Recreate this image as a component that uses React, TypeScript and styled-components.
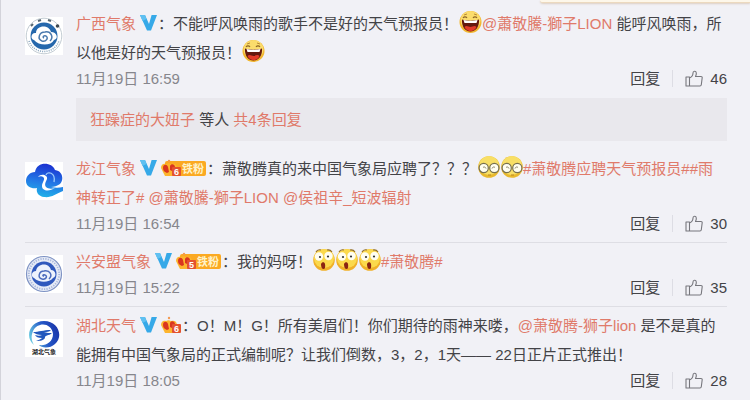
import React from "react";
import styled, { createGlobalStyle } from "styled-components";

const GlobalStyle = createGlobalStyle`
  * { box-sizing: border-box; }
  body {
    margin: 0;
    background: #f1f1f6;
    color: #434347;
    font-family: "Liberation Sans", "Noto Sans CJK SC", sans-serif;
    font-size: 15px;
  }
`;

const Page = styled.main`
  position: relative;
  min-height: 100vh;
  overflow: hidden;
  border-left: 1px solid #d3d3da;
`;

const Notice = styled.div`
  position: absolute;
  top: 0;
  right: 0;
  width: 28%;
  height: 3px;
  background: #fdf7ea;
  border-bottom: 1px solid #ecd9bf;
  border-bottom-left-radius: 3px;
  box-shadow: 0 1px 2px #dccfc4;
`;

const List = styled.ul`
  margin: 0;
  padding: 4px 23px 0 24px;
  list-style: none;
`;

const Item = styled.li<{ $line?: boolean }>`
  display: flex;
  gap: 13px;
  padding: 4px 0 8px;
  border-top: 1px solid ${(p) => (p.$line ? "#dedee4" : "transparent")};
`;

const Avatar = styled.a`
  flex: none;
  width: 38px;
  height: 38px;
  margin-top: 8px;
  background: #fff;
  svg { display: block; }
`;

const Body = styled.div`
  flex: 1;
  min-width: 0;
`;

const Text = styled.p`
  margin: 0;
  line-height: 29px;
  white-space: nowrap;
`;

const Link = styled.a`
  color: #e07a6a;
  text-decoration: none;
`;

const Glyph = styled.svg<{ $gap?: number }>`
  display: inline-block;
  vertical-align: middle;
  margin: -4px 0 0 ${(p) => p.$gap ?? 0}px;
`;

const Face = styled(Glyph)`
  margin: -6px 0 0 1px;
`;

const Meta = styled.div`
  display: flex;
  align-items: center;
  height: 21px;
  margin-top: 1px;
  line-height: 16px;
`;

const Time = styled.time`
  flex: 1;
  color: #86868c;
`;

const Action = styled.button`
  display: flex;
  align-items: center;
  padding: 0;
  border: 0;
  background: none;
  color: inherit;
  font: inherit;
`;

const Like = styled(Action)`
  gap: 7px;
  margin-left: 12px;
  padding-left: 12px;
  border-left: 1px solid #dddde4;
`;

const Replies = styled.div`
  margin-top: 9px;
  padding: 7px 14px;
  line-height: 29px;
  background: #e9e8ed;
`;

const Verified = () => (
  <Glyph $gap={3} width="19" height="18" viewBox="0 0 19 18" role="img" aria-label="认证">
    <path d="M1 1h5l4 9 2.600-9H18l-6 15.500H8z" fill="#36a9e8" />
    <path d="M1 1h5l1.500 4-4 2z" fill="#5fc0f1" />
  </Glyph>
);

const Flame = ({ level }: { level: string }) => (
  <>
    <path d="M1 9C1 6 3 4 6 5c2-1 3-1 5 0 3-1 6 0 6 4l-2 8H5z" fill="#fdb52e" />
    <circle cx="9" cy="2" r="1.200" fill="#f39a52" />
    <path d="M3 9c0-4 4-4 5-1l1 5-2 1C4 13 3 11 3 9zM10 7c1-3 5-2 5 1l-3 4-2-1z" fill="#d9361f" />
    <rect x="12" y="8" width="9" height="9" rx="1" fill="#e4522f" />
    <text x="16.500" y="16" fontSize="9" fontWeight="700" textAnchor="middle" fill="#fff">{level}</text>
  </>
);

const FanBadge = ({ level }: { level: string }) => (
  <Glyph $gap={2} width="47" height="18" viewBox="0 0 47 18" role="img" aria-label={"铁粉" + level}>
    <rect x="5" y="2" width="41" height="15" rx="2" fill="#fba922" />
    <Flame level={level} />
    <text x="22" y="14" fontSize="11" fontWeight="700" fill="#fff2c8">铁粉</text>
  </Glyph>
);

const SmallBadge = ({ level }: { level: string }) => (
  <Glyph $gap={2} width="22" height="18" viewBox="0 0 22 18" role="img" aria-label={"粉丝" + level}>
    <Flame level={level} />
  </Glyph>
);

const Laugh = () => (
  <Face width="23" height="24" viewBox="0 0 23 24" role="img" aria-label="哈哈">
    <circle cx="11.500" cy="12" r="11" fill="#f2b62f" />
    <ellipse cx="11.500" cy="10.500" rx="10" ry="9.500" fill="#fbdc6c" />
    <path d="M5 5l3-1M15 4l3 1" stroke="#b98a35" strokeWidth="1" />
    <path d="M4 8c1-1.500 3-1.500 4 0M14 8c1-1.500 3-1.500 4 0" fill="none" stroke="#8d6526" strokeWidth="1.100" />
    <path d="M3 9.500c5 1.500 12 1.500 17 0 .5 7-3 12-8.500 12S2.500 16.500 3 9.500z" fill="#64180e" />
    <path d="M4.500 10c4 1 10 1 14 0l-1 3h-12z" fill="#fff" />
    <path d="M5.500 17c2-2 4 0 6 0s4-2 6 0c-2 5.500-10 5.500-12 0z" fill="#e23a28" />
  </Face>
);

const Glasses = () => (
  <Face width="22" height="24" viewBox="0 0 22 24" role="img" aria-label="书呆子">
    <circle cx="11" cy="12" r="10.800" fill="#e9b92d" />
    <ellipse cx="11" cy="10.500" rx="10" ry="9.500" fill="#f8df66" />
    <circle cx="5.700" cy="13" r="4.600" fill="#fffef0" stroke="#77704e" strokeWidth="1.200" />
    <circle cx="16.300" cy="13" r="4.600" fill="#fffef0" stroke="#77704e" strokeWidth="1.200" />
    <path d="M5 12.500c1-1 2.500-.5 3 1M17 12.500c-1-1-2.500-.5-3 1" fill="none" stroke="#8a8468" strokeWidth="1" />
    <path d="M10 20h3" fill="none" stroke="#b98723" />
  </Face>
);

const Shock = () => (
  <Face width="22" height="24" viewBox="0 0 22 24" role="img" aria-label="吃惊">
    <circle cx="11" cy="12" r="10.800" fill="#f0b028" />
    <ellipse cx="11" cy="10.500" rx="10" ry="9.500" fill="#fbd94c" />
    <path d="M3 4c1-2 3-2.500 5-2M14 2c2-.5 4 .5 5 2" fill="none" stroke="#8f6a26" strokeWidth="1.100" />
    <circle cx="6" cy="8.500" r="4.200" fill="#fffdf0" />
    <circle cx="15.500" cy="8" r="4.200" fill="#fffdf0" />
    <circle cx="7" cy="9" r="1.100" fill="#333" />
    <circle cx="15" cy="8.500" r="1.100" fill="#333" />
    <path d="M8 16c1-2.500 3.500-2.500 4 0 .5 3 0 5-1.500 5S8 19 8 16z" fill="#8a2412" />
  </Face>
);

const ThumbUp = () => (
  <svg width="18" height="17" viewBox="0 0 18 17" fill="none" stroke="#77777d" strokeWidth="1.100" strokeLinejoin="round" aria-hidden="true">
    <path d="M1 7h3.500v9H1zM4.500 8C7 7 8 5 8 3c0-2 3-2.500 3.300 0 .2 1.500-.3 2.500-.8 3.500H16c.8 0 1.300.5 1.200 1.300l-.9 7c-.1.700-.6 1.200-1.300 1.200H4.500z" />
  </svg>
);

const GuangxiLogo = () => (
  <svg width="38" height="38" viewBox="0 0 38 38" aria-hidden="true">
    <circle cx="19" cy="19" r="17.800" fill="#fff" stroke="#c3ccd3" strokeWidth="1" />
    <path d="M4 24c5 14 25 14 30 0" fill="none" stroke="#8ba6bb" strokeWidth="1.500" strokeDasharray="1 1.200" />
    <circle cx="19" cy="19" r="13.500" fill="#2668ac" />
    <path d="M9 23c-4-1-3-8 2-7 0-8 13-9 15-1 6 0 8 7 3 8-3 6-15 6-20 0z" fill="#fff" />
    <path d="M25 24c4-4 1-10-5-9-6 0-8 7-3 9 4 1 7-3 4-5-2-1-4 1-2 2" fill="none" stroke="#4a79ad" strokeWidth="1.500" />
    <circle cx="32.500" cy="9" r="1.800" fill="#3d4850" />
    <path d="M13 4l3-1M23 3l3 1M6 9l2-2" stroke="#56656f" strokeWidth="2" />
  </svg>
);

const LongjiangLogo = () => (
  <svg width="38" height="38" viewBox="0 0 38 38" aria-hidden="true">
    <defs>
      <linearGradient id="lj" x1="0.600" y1="0" x2="0.400" y2="1">
        <stop offset="0" stopColor="#1b2fd0" />
        <stop offset="0.550" stopColor="#2379e6" />
        <stop offset="1" stopColor="#21b3e8" />
      </linearGradient>
    </defs>
    <path d="M10 10C12-1 27 0 30 8c8 1 9 10 5 14-3 2-6 3-9 3 4 1 8 1 12 0v4c-7 3-12 7-19 6-6-1-8-5-7-9-5 1-11-1-11-7 0-5 4-9 9-9z" fill="url(#lj)" />
    <path d="M13 15c3-4 10-2 9 2-1 3-3 5-1 8 2 2 6 2 9 1-6 4-13 3-13-2 0-4 4-7 1-9-1-1-3-1-5 0z" fill="#fff" />
    <path d="M21 13c1-4 10-3 8 7" fill="none" stroke="#9ccbfb" strokeWidth="1.300" />
  </svg>
);

const XinganLogo = () => (
  <svg width="38" height="38" viewBox="0 0 38 38" aria-hidden="true">
    <circle cx="19" cy="19" r="17.500" fill="#e6ebf6" stroke="#7f93c4" strokeWidth="1.200" />
    <circle cx="19" cy="19" r="15.200" fill="none" stroke="#a9b8dc" strokeWidth="1.800" strokeDasharray="1.200 1.300" />
    <circle cx="19" cy="19" r="12.500" fill="#3059bd" />
    <path d="M9 23c-4-2-2-7 2-7 1-8 13-9 15-1 5 0 6 7 2 8-4 5-14 5-19 0z" fill="#edf2fc" />
    <path d="M24 24c4-4 1-9-5-8-5 0-7 7-2 8 4 1 6-3 3-4-2-1-3 1-1 1" fill="none" stroke="#4c6cbd" strokeWidth="1.500" />
  </svg>
);

const HubeiLogo = () => (
  <svg width="38" height="38" viewBox="0 0 38 38" aria-hidden="true">
    <defs>
      <linearGradient id="hb" x1="0" y1="0.600" x2="1" y2="0.300">
        <stop offset="0" stopColor="#6bcbe2" />
        <stop offset="0.500" stopColor="#2559c8" />
        <stop offset="1" stopColor="#1a33a8" />
      </linearGradient>
    </defs>
    <path d="M9 26C-1 18 5 2 19 2c14 0 20 15 11 23-5 5-14 4-16 1 7 1 14-3 14-11C27 4 13 2 8 12c-2 5-2 9 1 14z" fill="url(#hb)" />
    <path d="M8 13c6 0 10-2 18-2-2 2-4 2-7 2 3 1 5 1 8 1-3 3-8 2-7 5-2 3-6 3-9 3 3-1 5-2 6-3-4 0-6-1-7-3 3 1 5 1 7 0-4 0-7-1-9-3z" fill="#2358bd" />
    <text x="19" y="35" fontSize="6" fontWeight="700" textAnchor="middle" fill="#222">湖北气象</text>
  </svg>
);

const Footer = ({ time, likes }: { time: string; likes: number }) => (
  <Meta>
    <Time>{time}</Time>
    <Action type="button">回复</Action>
    <Like type="button" aria-label={"赞 " + likes}>
      <ThumbUp />
      {likes}
    </Like>
  </Meta>
);

export default function App() {
  return (
    <>
      <GlobalStyle />
      <Page>
        <Notice />
        <List>
          <Item>
            <Avatar href="#" aria-label="广西气象"><GuangxiLogo /></Avatar>
            <Body>
              <Text>
                <Link href="#">广西气象</Link><Verified />：不能呼风唤雨的歌手不是好的天气预报员！<Laugh />
                <Link href="#">@蕭敬騰-獅子LION</Link> 能呼风唤雨，所<br />
                以他是好的天气预报员！<Laugh />
              </Text>
              <Footer time="11月19日 16:59" likes={46} />
              <Replies>
                <Link href="#">狂躁症的大妞子</Link> 等人 <Link href="#">共4条回复</Link>
              </Replies>
            </Body>
          </Item>
          <Item>
            <Avatar href="#" aria-label="龙江气象"><LongjiangLogo /></Avatar>
            <Body>
              <Text>
                <Link href="#">龙江气象</Link><Verified /><FanBadge level="6" />：萧敬腾真的来中国气象局应聘了？？？<Glasses /><Glasses />
                <Link href="#">#萧敬腾应聘天气预报员#</Link><Link href="#">#雨<br />神转正了#</Link>{" "}
                <Link href="#">@蕭敬騰-獅子LION</Link> <Link href="#">@侯祖辛_短波辐射</Link>
              </Text>
              <Footer time="11月19日 16:54" likes={30} />
            </Body>
          </Item>
          <Item $line>
            <Avatar href="#" aria-label="兴安盟气象"><XinganLogo /></Avatar>
            <Body>
              <Text>
                <Link href="#">兴安盟气象</Link><Verified /><FanBadge level="5" />：我的妈呀！<Shock /><Shock /><Shock />
                <Link href="#">#萧敬腾#</Link>
              </Text>
              <Footer time="11月19日 15:22" likes={35} />
            </Body>
          </Item>
          <Item $line>
            <Avatar href="#" aria-label="湖北天气"><HubeiLogo /></Avatar>
            <Body>
              <Text>
                <Link href="#">湖北天气</Link><Verified /><SmallBadge level="6" />：O！M！G！所有美眉们！你们期待的雨神来喽，
                <Link href="#">@萧敬腾-狮子lion</Link> 是不是真的<br />
                能拥有中国气象局的正式编制呢？让我们倒数，3，2，1天—— 22日正片正式推出！
              </Text>
              <Footer time="11月19日 18:05" likes={28} />
            </Body>
          </Item>
        </List>
      </Page>
    </>
  );
}
